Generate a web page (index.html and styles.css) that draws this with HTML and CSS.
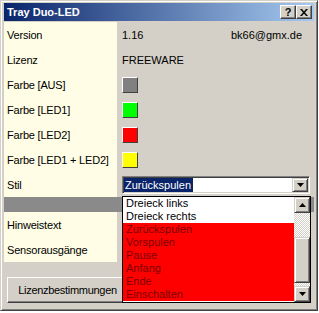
FILE: index.html
```html
<!DOCTYPE html>
<html lang="de">
<head>
    <meta charset="UTF-8">
    <title>Tray Duo-LED</title>
    <link rel="stylesheet" href="styles.css">
</head>
<body>

    <div class="window">
        <div class="titlebar">
            <span class="title">Tray Duo-LED</span>
            <div class="caption-buttons">
                <span class="cap-btn help">?</span>
                <span class="cap-btn close">
                    <svg width="8" height="7" viewBox="0 0 8 7"><path d="M0 0h2l2 2.5L6 0h2L5 3.5 8 7H6L4 4.5 2 7H0l3-3.5z" fill="#000"/></svg>
                </span>
            </div>
        </div>

        <div class="client">
            <div class="grid">
                <div class="label">Version</div>
                <div class="value split"><span>1.16</span><span class="mail">bk66@gmx.de</span></div>

                <div class="label">Lizenz</div>
                <div class="value">FREEWARE</div>

                <div class="label">Farbe [AUS]</div>
                <div class="value"><span class="swatch off"></span></div>

                <div class="label">Farbe [LED1]</div>
                <div class="value"><span class="swatch led1"></span></div>

                <div class="label">Farbe [LED2]</div>
                <div class="value"><span class="swatch led2"></span></div>

                <div class="label">Farbe [LED1 + LED2]</div>
                <div class="value"><span class="swatch both"></span></div>

                <div class="label">Stil</div>
                <div class="value">
                    <div class="combo">
                        <span class="combo-text">Zurückspulen</span>
                        <span class="arrow-btn">
                            <svg width="7" height="4" viewBox="0 0 7 4"><path d="M0 0h7L3.5 4z" fill="#000"/></svg>
                        </span>
                    </div>
                </div>

                <div class="separator"></div>

                <div class="label">Hinweistext</div>
                <div class="value"></div>

                <div class="label">Sensorausgänge</div>
                <div class="value"></div>
            </div>

            <div class="footer">
                <button class="btn">Lizenzbestimmungen</button>
            </div>
        </div>

        <!-- aufgeklappte Liste der Combobox -->
        <div class="dropdown">
            <ul class="items">
                <li>Dreieck links</li>
                <li>Dreieck rechts</li>
                <li class="hot">Zurückspulen</li>
                <li class="hot">Vorspulen</li>
                <li class="hot">Pause</li>
                <li class="hot">Anfang</li>
                <li class="hot">Ende</li>
                <li class="hot">Einschalten</li>
            </ul>
            <div class="scrollbar">
                <span class="arrow-btn sb-btn">
                    <svg width="7" height="4" viewBox="0 0 7 4"><path d="M0 4h7L3.5 0z" fill="#000"/></svg>
                </span>
                <div class="track top-track"></div>
                <div class="thumb"></div>
                <div class="track"></div>
                <span class="arrow-btn sb-btn">
                    <svg width="7" height="4" viewBox="0 0 7 4"><path d="M0 0h7L3.5 4z" fill="#000"/></svg>
                </span>
            </div>
        </div>
    </div>

</body>
</html>
```

FILE: styles.css
```css
body {
    margin: 0;
    background: #fff;
    font-family: "Liberation Sans", Arial, sans-serif;
    font-size: 11px;
    color: #000;
}
.window {
    position: relative;
    box-sizing: border-box;
    width: 318px;
    height: 311px;
    background: #d4d0c8;
    border: 1px solid;
    border-color: #d4d0c8 #404040 #404040 #d4d0c8;
    box-shadow: inset 1px 1px #fff, inset -1px -1px #808080;
    padding: 2px 3px 2px 3px;
    display: flex;
    flex-direction: column;
}
.titlebar {
    height: 18px;
    background: linear-gradient(to right, #0a246a, #a6caf0);
    display: flex;
    align-items: center;
    justify-content: space-between;
    padding: 0 2px 0 3px;
}
.title {
    color: #fff;
    font-weight: bold;
    font-size: 11px;
}
.caption-buttons {
    display: flex;
}
.cap-btn {
    box-sizing: border-box;
    width: 16px;
    height: 14px;
    background: #d4d0c8;
    border: 1px solid;
    border-color: #fff #404040 #404040 #fff;
    box-shadow: inset -1px -1px #808080;
    display: flex;
    align-items: center;
    justify-content: center;
    font-weight: bold;
    font-size: 11px;
    line-height: 1;
}
.client {
    margin-top: 1px;
    flex: 1;
    display: flex;
    flex-direction: column;
}
.grid {
    display: grid;
    grid-template-columns: 113px 1fr;
    grid-template-rows: repeat(7, 25px) 15px repeat(2, 25px);
}
.label {
    background: #fffde5;
    padding-left: 3px;
    letter-spacing: -0.2px;
    display: flex;
    align-items: center;
}
.value {
    padding-left: 5px;
    display: flex;
    align-items: center;
}
.split {
    justify-content: space-between;
    padding-right: 12px;
}
.swatch {
    box-sizing: border-box;
    width: 16px;
    height: 16px;
    border: 1px solid;
    border-color: #fff #404040 #404040 #fff;
}
.swatch.off { background: #808080; }
.swatch.led1 { background: #00ff00; }
.swatch.led2 { background: #ff0000; }
.swatch.both { background: #ffff00; }
.separator {
    grid-column: 1 / -1;
    background: #8a8a8a;
}
.combo {
    box-sizing: border-box;
    width: 188px;
    height: 18px;
    background: #fff;
    border: 1px solid;
    border-color: #808080 #fff #fff #808080;
    box-shadow: inset 1px 1px #404040, inset -1px -1px #d4d0c8;
    padding: 1px;
    display: flex;
    justify-content: space-between;
}
.combo-text {
    background: #0a246a;
    color: #fff;
    padding: 0 2px 0 1px;
    line-height: 14px;
}
.arrow-btn {
    box-sizing: border-box;
    width: 16px;
    height: 14px;
    background: #d4d0c8;
    border: 1px solid;
    border-color: #d4d0c8 #404040 #404040 #d4d0c8;
    box-shadow: inset 1px 1px #fff, inset -1px -1px #808080;
    display: flex;
    align-items: center;
    justify-content: center;
}
.footer {
    flex: 1;
    padding: 15px 0 0 3px;
}
.btn {
    box-sizing: border-box;
    width: 121px;
    height: 26px;
    background: #d4d0c8;
    border: 1px solid;
    border-color: #fff #404040 #404040 #fff;
    box-shadow: inset -1px -1px #808080;
    font-family: "Liberation Sans", Arial, sans-serif;
    font-size: 11px;
    letter-spacing: -0.3px;
    color: #000;
    padding: 0;
}
.dropdown {
    position: absolute;
    left: 121px;
    top: 195px;
    box-sizing: border-box;
    width: 189px;
    height: 107px;
    border: 1px solid #000;
    background: #fff;
    display: flex;
}
.items {
    list-style: none;
    margin: 0;
    padding: 0;
    flex: 1;
}
.items li {
    height: 13px;
    line-height: 13px;
    padding-left: 3px;
}
.items li.hot {
    background: #ff0000;
    color: #7a0000;
}
.scrollbar {
    width: 16px;
    display: flex;
    flex-direction: column;
}
.sb-btn {
    height: 16px;
}
.track {
    flex: 1;
    background: repeating-conic-gradient(#fff 0 25%, #d4d0c8 0 50%) 0 0 / 2px 2px;
}
.top-track {
    flex: 0 0 24px;
}
.thumb {
    box-sizing: border-box;
    height: 46px;
    background: #d4d0c8;
    border: 1px solid;
    border-color: #d4d0c8 #404040 #404040 #d4d0c8;
    box-shadow: inset 1px 1px #fff, inset -1px -1px #808080;
}
```
